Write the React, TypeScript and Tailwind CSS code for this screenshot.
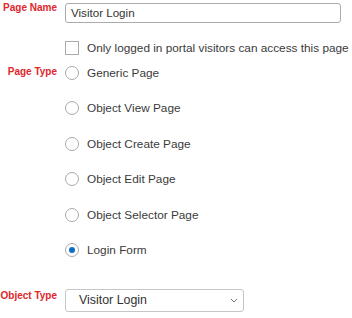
import React from "react";

const options = [
  "Generic Page",
  "Object View Page",
  "Object Create Page",
  "Object Edit Page",
  "Object Selector Page",
  "Login Form",
];

function Radio({ checked }: { checked?: boolean }) {
  return (
    <span className="flex h-[14px] w-[14px] shrink-0 items-center justify-center rounded-full border border-[#a9a9a9] bg-white">
      {checked ? <span className="h-[6px] w-[6px] rounded-full bg-[#0a6fc2]" /> : null}
    </span>
  );
}

export default function App() {
  return (
    <div
      className="relative h-[318px] w-[352px] overflow-hidden bg-white text-[#333333]"
      style={{ fontFamily: '"Liberation Sans", Arial, sans-serif' }}
    >
      <div className="pt-[3px]">
        <div className="flex items-start">
          <label className="mt-[-1px] w-[57px] shrink-0 text-right text-[10px] font-bold leading-[12px] text-[#e0262c]">
            Page Name
          </label>
          <div className="ml-2 flex h-[20px] w-[276px] items-center rounded-[3px] border border-[#ababab] pl-[5px] text-[11.6px] text-[#333]">
            Visitor Login
          </div>
        </div>

        <div className="mt-[18px] flex items-center pl-[65px]">
          <span className="h-[14px] w-[14px] shrink-0 border border-[#ababab] bg-white" />
          <span className="ml-2 text-[11.8px] leading-[14px] text-[#3a3a3a]">
            Only logged in portal visitors can access this page
          </span>
        </div>

        <div className="mt-[10.5px] flex items-start">
          <label className="w-[57px] shrink-0 text-right text-[10px] font-bold leading-[12px] text-[#e0262c]">
            Page Type
          </label>
          <div className="ml-2 flex flex-col gap-[21.5px]">
            {options.map((o) => (
              <div key={o} className="flex h-[14px] items-center">
                <Radio checked={o === "Login Form"} />
                <span className="ml-2 text-[11.8px] leading-[14px] text-[#3a3a3a]">{o}</span>
              </div>
            ))}
          </div>
        </div>

        <div className="mt-[31.5px] flex items-start">
          <label className="pt-[1px] w-[57px] shrink-0 text-right text-[10px] font-bold leading-[12px] text-[#e0262c]">
            Object Type
          </label>
          <div className="ml-2 flex h-[23px] w-[179px] items-center justify-between rounded-[3px] border border-[#c6c6c6] pl-[13px] pr-[4px] text-[12.4px] text-[#333]">
            <span>Visitor Login</span>
            <svg width="8" height="5" viewBox="0 0 8 5" fill="none" className="mr-[1px]">
              <path d="M1 1l3 3 3-3" stroke="#777" strokeWidth="1" />
            </svg>
          </div>
        </div>
      </div>
    </div>
  );
}
